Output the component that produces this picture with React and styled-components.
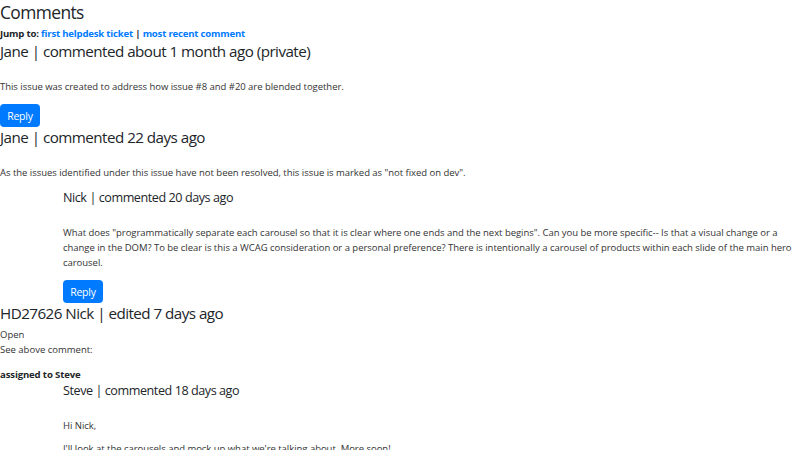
import React from 'react';
import styled, { createGlobalStyle } from 'styled-components';

const GlobalStyle = createGlobalStyle`
  body {
    margin: 0;
    background: #fff;
    font-family: "Open Sans", "Noto Sans", sans-serif;
    color: #212529;
  }
`;

const Page = styled.div`
  display: flex;
  flex-direction: column;
`;

const Title = styled.h2`
  margin: 0;
  font-size: 17.4px;
  letter-spacing: -0.6px;
  line-height: 24px;
  font-weight: 400;
`;

const JumpTo = styled.div`
  margin-top: 1.5px;
  font-size: 9.6px;
  letter-spacing: -0.2px;
  line-height: 15px;
  font-weight: 700;

  a {
    color: #007bff;
    text-decoration: none;
  }
`;

const CommentBox = styled.div`
  display: flex;
  flex-direction: column;
  align-items: flex-start;
  padding-left: ${(p) => (p.$nested ? '63px' : '0')};
`;

const Header = styled.h4`
  margin: 0;
  margin-top: ${(p) => p.$gap || 0}px;
  font-weight: 400;
  font-size: ${(p) => (p.$small ? '12.6px' : '15.2px')};
  letter-spacing: ${(p) => (p.$small ? '-0.44px' : '-0.53px')};
  line-height: ${(p) => (p.$small ? '18px' : '20px')};
`;

const Body = styled.div`
  margin-top: ${(p) => p.$gap || 18}px;
  font-size: 9.5px;
  letter-spacing: -0.03px;
  line-height: 15px;
  color: #333;

  p {
    margin: 0;
  }

  p + p {
    margin-top: 8px;
  }
`;

const ReplyButton = styled.button`
  margin-top: 10.5px;
  width: 40px;
  height: 23px;
  padding: 0;
  border: none;
  border-radius: 4px;
  background: #007bff;
  color: #fff;
  font-family: inherit;
  font-size: 10.5px;
  letter-spacing: -0.2px;
  cursor: pointer;
`;

const Meta = styled.div`
  margin-top: 3.5px;
  font-size: 9.5px;
  line-height: 15.5px;
  color: #333;
`;

const Assigned = styled.div`
  margin-top: 9.5px;
  font-size: 9.6px;
  letter-spacing: -0.15px;
  line-height: 15px;
  font-weight: 700;
`;

export default function App() {
  return (
    <Page>
      <GlobalStyle />
      <Title>Comments</Title>
      <JumpTo>
        Jump to: <a href="#first">first helpdesk ticket</a> | <a href="#recent">most recent comment</a>
      </JumpTo>

      <CommentBox>
        <Header>Jane | commented about 1 month ago (private)</Header>
        <Body>
          <p>This issue was created to address how issue #8 and #20 are blended together.</p>
        </Body>
        <ReplyButton>Reply</ReplyButton>
      </CommentBox>

      <CommentBox>
        <Header>Jane | commented 22 days ago</Header>
        <Body>
          <p>As the issues identified under this issue have not been resolved, this issue is marked as "not fixed on dev".</p>
        </Body>
        <CommentBox $nested>
          <Header $small $gap={8.5}>Nick | commented 20 days ago</Header>
          <Body>
            <p>
              What does "programmatically separate each carousel so that it is clear where one ends and the next begins". Can you be more specific-- Is that a visual change or a change in the DOM? To be clear is this a WCAG consideration or a personal preference? There is intentionally a carousel of products within each slide of the main hero carousel.
            </p>
          </Body>
          <ReplyButton>Reply</ReplyButton>
        </CommentBox>
      </CommentBox>

      <CommentBox>
        <Header>HD27626 Nick | edited 7 days ago</Header>
        <Meta>
          Open
          <br />
          See above comment:
        </Meta>
        <Assigned>assigned to Steve</Assigned>
        <CommentBox $nested>
          <Header $small>Steve | commented 18 days ago</Header>
          <Body $gap={17.5}>
            <p>Hi Nick,</p>
            <p>I'll look at the carousels and mock up what we're talking about. More soon!</p>
          </Body>
        </CommentBox>
      </CommentBox>
    </Page>
  );
}
